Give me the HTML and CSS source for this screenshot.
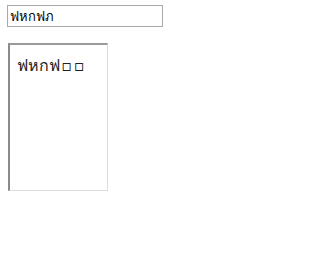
FILE: index.html
```html
<!DOCTYPE html>
<html>
<head>
<meta charset="utf-8">
<link rel="stylesheet" href="styles.css">
</head>
<body>
<div class="page">
  <input class="field" type="text" value="ฟหกฟภ">
  <textarea class="note">ฟหกฟ&#x200A;▫&#x200A;▫</textarea>
</div>
</body>
</html>
```
FILE: styles.css
```css
html, body {
  margin: 0;
  background: #fff;
}
.page {
  padding: 5px 0 0 7px;
  display: flex;
  flex-direction: column;
  align-items: flex-start;
  gap: 16px;
}
.field {
  box-sizing: border-box;
  width: 156px;
  height: 22px;
  margin: 0;
  padding: 0 2px;
  border: 1px solid #a9a9a9;
  font-family: Tahoma, "Noto Sans", "DejaVu Sans", sans-serif;
  font-size: 13px;
  color: #000;
  outline: none;
}
.note {
  box-sizing: border-box;
  width: 100px;
  height: 148px;
  margin: 0 0 0 1px;
  padding: 8px 7px;
  border-style: solid;
  border-width: 2px 1px 1px 2px;
  border-color: #9a9a9a #dcdcdc #dcdcdc #8a8a8a;
  font-family: Tahoma, "Noto Sans", "DejaVu Sans", sans-serif;
  font-size: 16px;
  color: #222;
  resize: none;
  outline: none;
  overflow: hidden;
}
```
